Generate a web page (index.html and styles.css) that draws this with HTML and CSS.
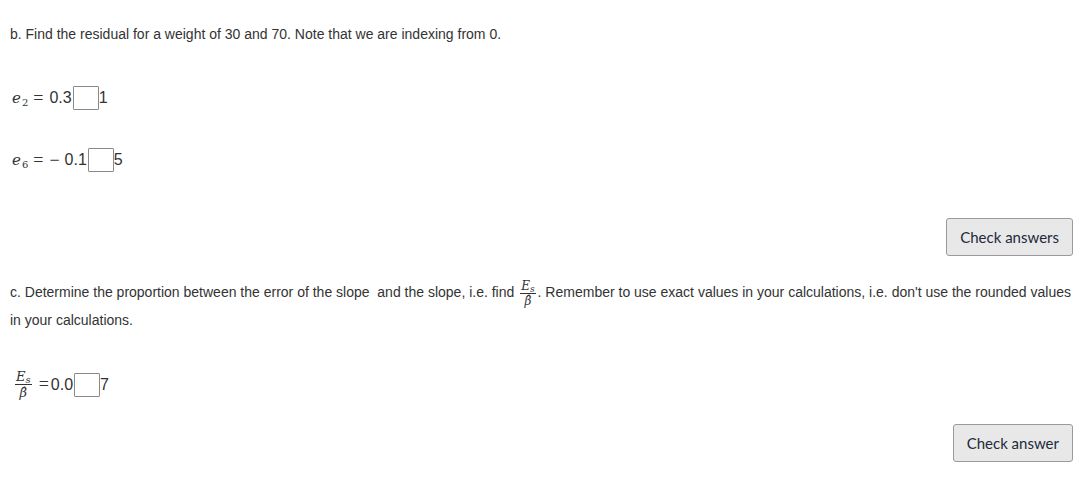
FILE: index.html
```html
<!DOCTYPE html>
<html>
<head>
<meta charset="utf-8">
<link rel="stylesheet" href="styles.css">
</head>
<body>
<div class="page">
  <p class="q q-b">b. Find the residual for a weight of 30 and 70. Note that we are indexing from 0.</p>

  <div class="eq eq-1">
    <span class="mi">e</span><span class="sub">2</span><span class="rel">=</span><span class="num">0.3</span><span class="box"></span><span class="num">1</span>
  </div>

  <div class="eq eq-2">
    <span class="mi">e</span><span class="sub">6</span><span class="rel">=</span><span class="minus">&minus;</span><span class="num">0.1</span><span class="box"></span><span class="num">5</span>
  </div>

  <div class="actions actions-1">
    <button class="btn">Check answers</button>
  </div>

  <p class="q q-c">c. Determine the proportion between the error of the slope&nbsp; and the slope, i.e. find <span class="frac frac-inline"><span class="fnum"><span class="mi">E</span><span class="fsub">s</span></span><span class="fden">&beta;&#770;</span></span>. Remember to use exact values in your calculations, i.e. don't use the rounded values in your calculations.</p>

  <div class="eq eq-3">
    <span class="frac frac-row"><span class="fnum"><span class="mi">E</span><span class="fsub">s</span></span><span class="fden">&beta;&#770;</span></span><span class="rel rel-tight">=</span><span class="num">0.0</span><span class="box"></span><span class="num">7</span>
  </div>

  <div class="actions actions-2">
    <button class="btn">Check answer</button>
  </div>
</div>
</body>
</html>
```

FILE: styles.css
```css
html, body {
  margin: 0;
  padding: 0;
  background: #ffffff;
}

.page {
  padding: 25px 14px 0 10px;
  font-family: "Liberation Sans", Arial, sans-serif;
  font-size: 14px;
  color: #333333;
  display: flex;
  flex-direction: column;
}

.q {
  margin: 0;
  line-height: 18px;
}

.q-c {
  line-height: 26px;
  margin-top: 23px;
}

.eq {
  display: flex;
  align-items: center;
  height: 24px;
  font-size: 16px;
}

.eq-1 { margin-top: 43px; }
.eq-2 { margin-top: 38px; }
.eq-3 { margin-top: 39px; height: 26px; }

.mi {
  font-family: "DejaVu Serif", "Liberation Serif", serif;
  font-style: italic;
  font-size: 15px;
  margin-left: 2px;
}

.sub {
  font-family: "DejaVu Serif", "Liberation Serif", serif;
  font-size: 10px;
  position: relative;
  top: 4px;
  margin-left: 1px;
}

.rel {
  font-family: "Liberation Serif", "DejaVu Serif", serif;
  font-size: 18px;
  margin: 0 6px 0 5px;
}

.rel-tight {
  margin: 0 2px 0 7px;
  font-size: 18px;
}

.minus {
  font-family: "Liberation Serif", "DejaVu Serif", serif;
  font-size: 18px;
  margin-right: 5px;
}

.num {
  font-family: "Liberation Sans", Arial, sans-serif;
  font-size: 16px;
  color: #333333;
}

.box {
  display: inline-block;
  width: 24px;
  height: 22px;
  border: 1px solid #8a8a8a;
  border-radius: 1px;
  background: #ffffff;
  margin-left: 1px;
}

.actions {
  display: flex;
  justify-content: flex-end;
}

.actions-1 { margin-top: 46px; }
.actions-2 { margin-top: 26px; }

.btn {
  font-family: "Lato", "Open Sans", sans-serif;
  font-size: 15px;
  color: #1c2a3a;
  background: #e8e8e8;
  border: 1px solid #9a9a9a;
  border-radius: 3px;
  height: 38px;
  padding: 0 13px;
  cursor: pointer;
}

.frac {
  display: inline-flex;
  flex-direction: column;
  align-items: center;
  vertical-align: middle;
  line-height: 1;
  font-family: "DejaVu Serif", "Liberation Serif", serif;
}

.frac-inline {
  margin: 0 2px;
}

.fnum {
  border-bottom: 1px solid #333333;
  padding: 0 1px 1px;
  display: flex;
  align-items: baseline;
}

.fnum .mi {
  font-size: 12px;
  margin-left: 0;
}

.fsub {
  font-size: 9px;
  font-style: italic;
  position: relative;
  top: 2px;
}

.fden {
  font-size: 12px;
  font-style: italic;
  padding-top: 1px;
}

.frac-row {
  margin-left: 5px;
}

.frac-row .fnum .mi {
  font-size: 13px;
}

.frac-row .fsub {
  font-size: 10px;
}

.frac-row .fden {
  font-size: 13px;
}
```
